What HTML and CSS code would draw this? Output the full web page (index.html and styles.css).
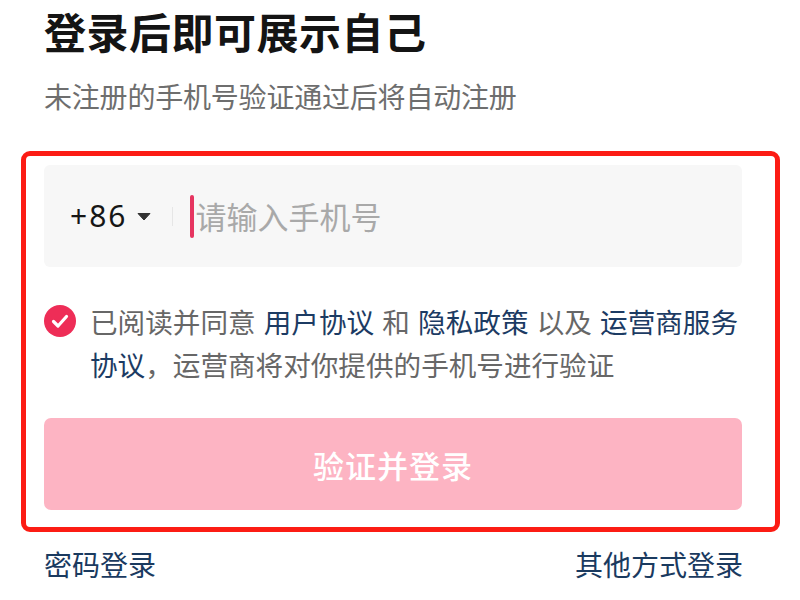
FILE: index.html
```html
<!DOCTYPE html>
<html lang="zh-CN">
<head>
<meta charset="utf-8">
<title>登录</title>
<link rel="stylesheet" href="styles.css">
</head>
<body>
<div class="page">
  <h1 class="title">登录后即可展示自己</h1>
  <p class="subtitle">未注册的手机号验证通过后将自动注册</p>

  <div class="highlight">
    <div class="phone-field">
      <span class="code">+86</span>
      <svg class="arrow" width="14" height="9" viewBox="0 0 14 9"><path d="M1 1.5 H13 L7 8 Z" fill="#333" stroke="#333" stroke-width="1" stroke-linejoin="round"/></svg>
      <span class="sep"></span>
      <span class="caret"></span>
      <span class="placeholder">请输入手机号</span>
    </div>

    <div class="agree">
      <svg class="check" width="32" height="32" viewBox="0 0 32 32">
        <circle cx="16" cy="16" r="16" fill="#ee2d57"/>
        <path d="M9.5 16.5 L14 21 L22.5 11.5" fill="none" stroke="#fff" stroke-width="3.2" stroke-linecap="round" stroke-linejoin="round"/>
      </svg>
      <p class="agree-text">已阅读并同意 <a class="link">用户协议</a> 和 <a class="link">隐私政策</a> 以及 <a class="link">运营商服务<br>协议</a>，运营商将对你提供的手机号进行验证</p>
    </div>

    <button class="submit">验证并登录</button>
  </div>

  <div class="footer">
    <a class="foot-link">密码登录</a>
    <a class="foot-link">其他方式登录</a>
  </div>
</div>
</body>
</html>
```

FILE: styles.css
```css
* { box-sizing: border-box; }

html, body {
  margin: 0;
  padding: 0;
  background: #ffffff;
}

body {
  font-family: "Noto Sans CJK SC", "Noto Sans", sans-serif;
  width: 800px;
  height: 600px;
  overflow: hidden;
}

.page {
  padding: 0 20px 0 21px;
}

.title {
  margin: 0 0 0 23px;
  font-size: 42px;
  line-height: 61px;
  font-weight: 700;
  color: #141414;
  letter-spacing: 0.5px;
}

.subtitle {
  margin: 15px 0 0 23px;
  font-size: 28px;
  line-height: 40px;
  color: #6e6e6e;
  letter-spacing: -0.2px;
}

.highlight {
  margin-top: 35px;
  border: 5px solid #fc1c14;
  border-radius: 9px;
  padding: 9px 33px 17px 18px;
}

.phone-field {
  height: 102px;
  background: #f7f7f7;
  border-radius: 6px;
  display: flex;
  align-items: center;
  padding-left: 26px;
}

.code {
  font-family: "Noto Sans", sans-serif;
  font-size: 30px;
  line-height: 40px;
  color: #161616;
  letter-spacing: 2px;
}

.arrow {
  margin-left: 10px;
  display: block;
}

.sep {
  width: 1px;
  height: 19px;
  margin-left: 21px;
  background: #e6e6e6;
}

.caret {
  width: 4px;
  height: 43px;
  margin-left: 17px;
  border-radius: 2px;
  background: #e63560;
}

.placeholder {
  margin-left: 1px;
  font-size: 31px;
  line-height: 40px;
  color: #a9a9a9;
}

.agree {
  display: flex;
  align-items: flex-start;
  margin-top: 33px;
}

.check {
  flex: none;
  margin-top: 5px;
  margin-right: 14px;
  display: block;
}

.agree-text {
  margin: 0;
  font-size: 27.6px;
  line-height: 43px;
  color: #676767;
  word-spacing: 2px;
  white-space: nowrap;
}

.link {
  color: #1c3b63;
}

.submit {
  display: block;
  width: 100%;
  height: 92px;
  margin-top: 32px;
  border: none;
  border-radius: 7px;
  background: #fdb4c3;
  color: #ffffff;
  font-family: "Noto Sans CJK SC", sans-serif;
  font-size: 31px;
  font-weight: 500;
  letter-spacing: 1px;
}

.footer {
  display: flex;
  justify-content: space-between;
  margin-top: 12px;
  padding: 0 37px 0 23px;
}

.foot-link {
  font-size: 28px;
  line-height: 40px;
  color: #1a3a5f;
}
```
